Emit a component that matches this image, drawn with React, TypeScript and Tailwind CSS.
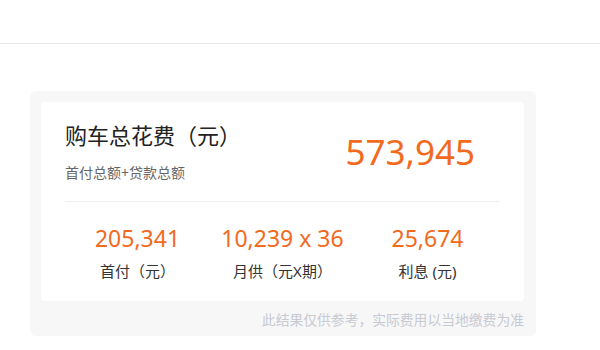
const font = { fontFamily: '"Noto Sans", "Noto Sans CJK SC", sans-serif' };

const items = [
  { value: "205,341", label: "首付（元）" },
  { value: "10,239 x 36", label: "月供（元X期）" },
  { value: "25,674", label: "利息 (元)" },
];

export default function App() {
  return (
    <div className="min-h-[350px] bg-white font-['Noto_Sans','Noto_Sans_CJK_SC',sans-serif]" style={font}>
      <div className="h-[44px] border-b border-[#e8e8e8]" />
      <div className="pt-[47px] pl-[30px]">
        <div className="w-[506px] rounded-md bg-[#f7f7f8] pt-[11px] pb-[6px] pl-[11px] pr-[12px]">
          <div className="rounded bg-white px-6 pt-[18px] pb-[19px]">
            <div className="flex items-center justify-between">
              <div>
                <div className="text-[22px] leading-[30px] text-[#222]">购车总花费（元）</div>
                <div className="mt-[13px] text-[14px] leading-[20px] text-[#666]">首付总额+贷款总额</div>
              </div>
              <div className="pr-[25px] text-[35px] leading-[44px] text-[#f26a1e]">573,945</div>
            </div>
            <div className="mt-[18px] border-t border-[#f0f0f0] pt-[20px]">
              <div className="grid grid-cols-3 text-center">
                {items.map((it) => (
                  <div key={it.label}>
                    <div className="text-[23px] leading-[32px] text-[#f26a1e]">{it.value}</div>
                    <div className="mt-[6px] text-[15px] leading-[22px] text-[#333]">{it.label}</div>
                  </div>
                ))}
              </div>
            </div>
          </div>
          <div className="mt-[9px] text-right text-[13.8px] leading-[20px] text-[#c8cad2]">
            此结果仅供参考，实际费用以当地缴费为准
          </div>
        </div>
      </div>
    </div>
  );
}
